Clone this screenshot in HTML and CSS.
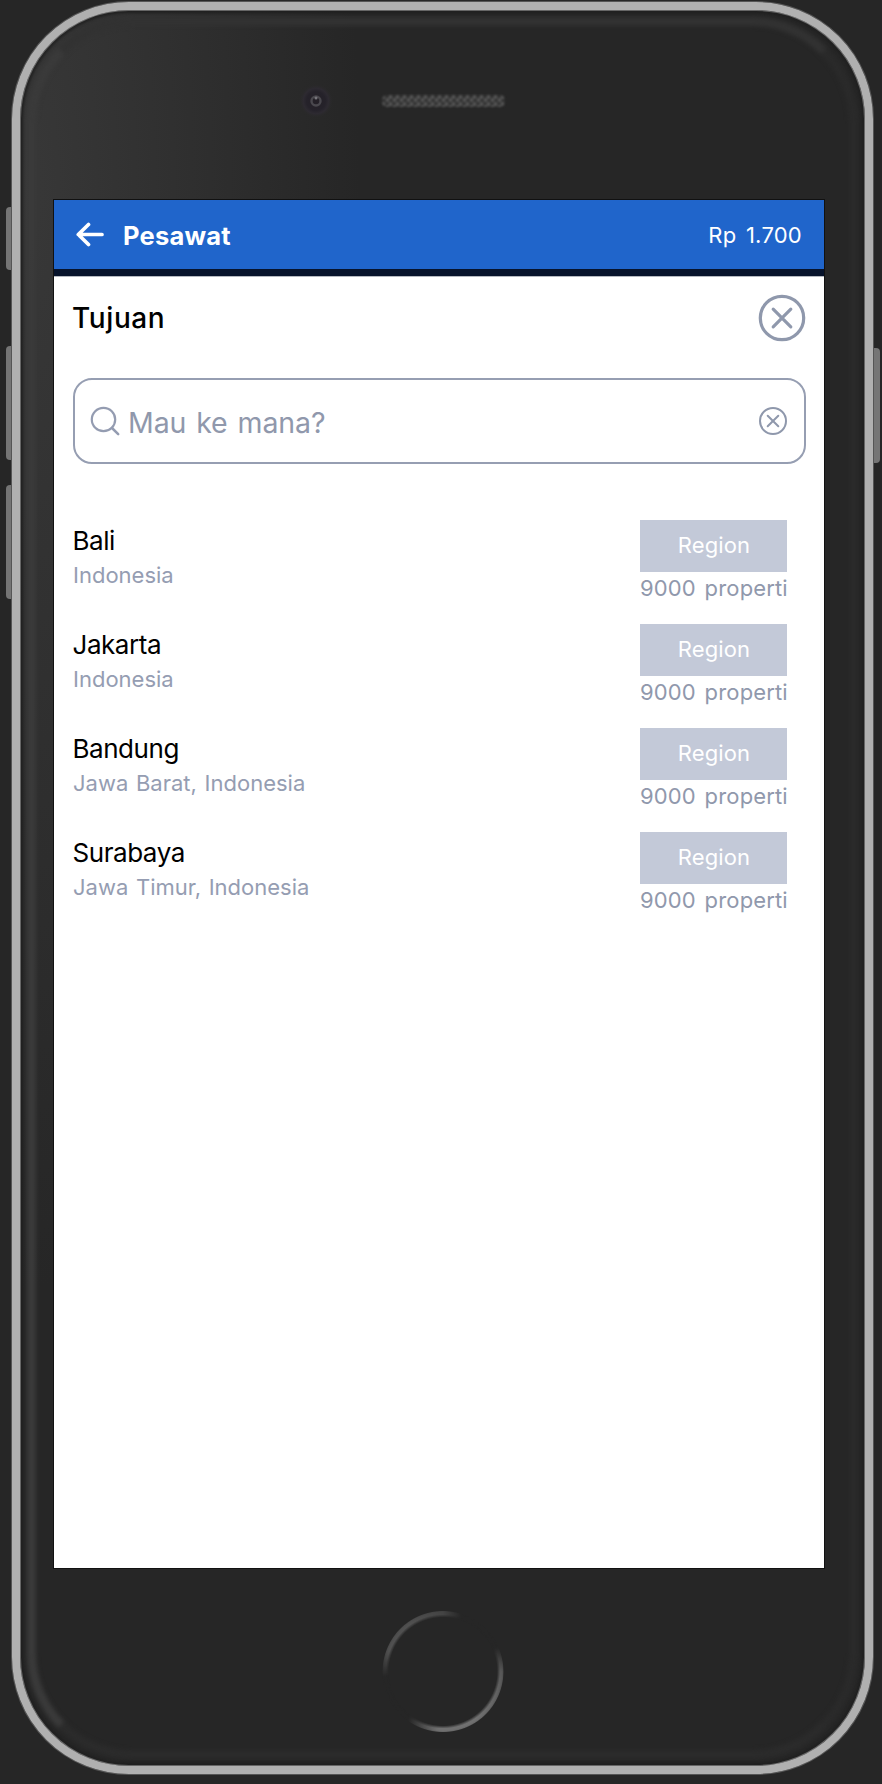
FILE: index.html
```html
<!DOCTYPE html>
<html lang="id">
<head>
<meta charset="utf-8">
<title>Pesawat</title>
<link rel="stylesheet" href="styles.css">
</head>
<body>
<div class="stage">
  <span class="key key-mute"></span>
  <span class="key key-up"></span>
  <span class="key key-down"></span>
  <span class="key key-power"></span>
  <div class="phone">
    <div class="glass"></div>
    <div class="bezel-top">
      <svg class="camera" width="36" height="36" viewBox="0 0 36 36">
        <defs><radialGradient id="lens"><stop offset="0" stop-color="#242027"/><stop offset=".55" stop-color="#25222a"/><stop offset=".75" stop-color="#2d2a31"/><stop offset="1" stop-color="#292929" stop-opacity="0"/></radialGradient></defs>
        <circle cx="18" cy="17" r="17" fill="url(#lens)"/>
        <circle cx="18" cy="17" r="4.5" fill="none" stroke="#4a484e" stroke-width="2.4"/>
        <circle cx="18" cy="14" r="1.5" fill="#77757b"/>
      </svg>
      <span class="speaker"></span>
    </div>
    <main class="screen">
      <header class="topbar">
        <svg class="back" width="30" height="26" viewBox="0 0 30 26"><path d="M13.5 2.5 3.3 12.5l10.2 10M3.5 12.5H27" fill="none" stroke="#fff" stroke-width="3.7" stroke-linecap="round" stroke-linejoin="round"/></svg>
        <h1 class="title">Pesawat</h1>
        <span class="price">Rp 1.700</span>
      </header>
      <section class="heading">
        <h2 class="heading-text">Tujuan</h2>
        <svg class="close" width="48" height="48" viewBox="0 0 48 48" fill="none" stroke="#8f98ac" stroke-width="3.2"><circle cx="24" cy="24" r="21.7"/><path d="m15.2 15.2 17.6 17.6m0-17.6L15.2 32.8" stroke-linecap="round"/></svg>
      </section>
      <div class="search">
        <svg class="glass-icon" width="30" height="30" viewBox="0 0 30 30" fill="none" stroke="#949cb1" stroke-width="2.2"><circle cx="13.5" cy="13.5" r="11.7"/><path d="m22 22 6.2 6.2" stroke-width="2.5" stroke-linecap="round"/></svg>
        <span class="placeholder">Mau ke mana?</span>
        <svg class="clear" width="30" height="30" viewBox="0 0 30 30" fill="none" stroke="#8f98ac" stroke-width="2"><circle cx="15" cy="15" r="13"/><path d="m9.7 9.7 10.6 10.6m0-10.6L9.7 20.3" stroke-linecap="round"/></svg>
      </div>
      <ul class="list">
        <li class="row"><div class="place"><span class="city">Bali</span><span class="area">Indonesia</span></div><div class="meta"><span class="badge">Region</span><span class="count">9000 properti</span></div></li>
        <li class="row"><div class="place"><span class="city">Jakarta</span><span class="area">Indonesia</span></div><div class="meta"><span class="badge">Region</span><span class="count">9000 properti</span></div></li>
        <li class="row"><div class="place"><span class="city">Bandung</span><span class="area">Jawa Barat, Indonesia</span></div><div class="meta"><span class="badge">Region</span><span class="count">9000 properti</span></div></li>
        <li class="row"><div class="place"><span class="city">Surabaya</span><span class="area">Jawa Timur, Indonesia</span></div><div class="meta"><span class="badge">Region</span><span class="count">9000 properti</span></div></li>
      </ul>
    </main>
    <div class="bezel-bottom"><span class="home"></span></div>
  </div>
</div>
</body>
</html>
```

FILE: styles.css
```css
* { box-sizing: border-box; }
body { margin: 0; background: #262626; font-family: Inter, "Liberation Sans", sans-serif; }
.stage { position: relative; width: 882px; height: 1784px; padding: 2px 9px 9px 12px; overflow: hidden; }
.key { position: absolute; width: 12px; border-radius: 4px; background: #757575; }
.key-mute { left: 6px; top: 207px; height: 63px; }
.key-up { left: 6px; top: 346px; height: 114px; }
.key-down { left: 6px; top: 485px; height: 114px; }
.key-power { left: 868px; top: 348px; height: 115px; }
.phone {
  position: relative; display: flex; flex-direction: column; height: 1772px;
  padding: 0 41px 0 34px; border: 8px solid #b0b0b0; border-radius: 117px;
  box-shadow: inset 0 0 0 1px #666, inset 0 0 3px 3px #202020, 0 0 0 1px #555;
  background: radial-gradient(ellipse 340px 1100px at 0 180px, #383838, #303030 45%, #262626);
}
.glass {
  position: absolute; inset: 7px; border: 9px solid; border-radius: 106px; filter: blur(2px);
  border-color: #323232 #2a2a2a #2b2b2b #3a3a3a;
}
.bezel-top { position: relative; display: flex; align-items: flex-start; gap: 48px; height: 190px; padding: 74px 0 0 244px; }
.speaker {
  width: 123px; height: 12px; margin-top: 11px; border-radius: 5px; filter: blur(1px);
  background: repeating-conic-gradient(#323232 0 25%, #555 0 50%) 0 0 / 7px 7px #444;
}
.screen { position: relative; height: 1368px; background: #fff; box-shadow: 0 0 0 1px #111; color: #000; }
.topbar { display: flex; align-items: center; height: 76px; padding: 0 22px 0 21px; background: #2065cb; border-bottom: 7px solid #07132b; box-shadow: 0 1px #b4b8bf; }
.title { flex: 1; margin: 3px 0 0 18px; color: #fff; font-size: 25.5px; font-weight: 650; line-height: 30px; letter-spacing: .2px; }
.price { margin-top: 1px; color: #fff; font-size: 22px; line-height: 30px; letter-spacing: .25px; word-spacing: 3px; white-space: pre; }
.heading { display: flex; align-items: center; justify-content: space-between; height: 83px; padding: 0 18px 0 19px; }
.heading-text { margin: 0 0 0 -1px; font-size: 28px; font-weight: 450; line-height: 36px; letter-spacing: .6px; }
.search { display: flex; align-items: center; height: 86px; margin: 19px 18px 0 19px; padding: 0 16px 0 15px; border: 2px solid #969eb2; border-radius: 19px; }
.placeholder { flex: 1; margin: 3px 0 0 8px; color: #9098ac; font-size: 28.5px; line-height: 36px; letter-spacing: -.1px; word-spacing: 2px; }
.list { margin: 56px 0 0; padding: 0; list-style: none; }
.row { display: flex; justify-content: space-between; height: 104.1px; padding: 0 37px 0 19px; }
.place { display: flex; flex-direction: column; padding-top: 5px; }
.city { margin-left: -.5px; font-size: 26px; line-height: 32px; letter-spacing: -.45px; }
.area { margin-top: 1px; color: #959db2; font-size: 22px; line-height: 34px; word-spacing: 1.5px; }
.meta { width: 147px; }
.badge { display: block; height: 52px; background: #c3c9d8; color: #fff; font-size: 22px; line-height: 51.5px; letter-spacing: .1px; text-indent: 1px; text-align: center; }
.count { display: block; color: #9098ac; font-size: 22px; line-height: 33px; letter-spacing: .15px; word-spacing: 2.4px; white-space: nowrap; }
.bezel-bottom { position: relative; display: flex; padding: 42px 0 0 328px; }
.home { width: 122px; height: 123px; border-radius: 50%; filter: blur(1px);
  background: conic-gradient(#444 0, #262626 18deg, #262626 66deg, #585858 90deg, #707070 145deg, #707070 185deg, #262626 216deg, #262626 265deg, #505050 290deg, #505050 325deg, #444 360deg);
  mask: radial-gradient(circle, transparent 54px, #000 57px, #000 60px, transparent 61px); }
```
